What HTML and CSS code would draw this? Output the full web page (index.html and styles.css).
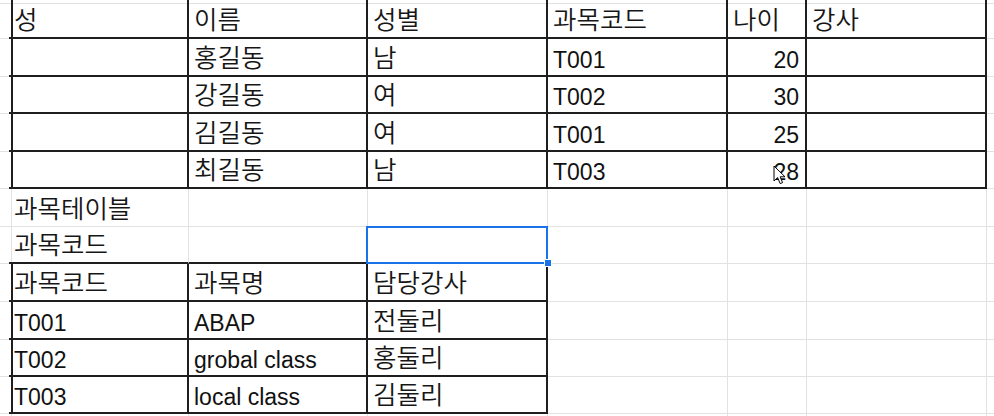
FILE: index.html
```html
<!DOCTYPE html>
<html lang="ko">
<head>
<meta charset="utf-8">
<title>Sheet</title>
<link rel="stylesheet" href="styles.css">
</head>
<body>
<div class="sheet">
  <!-- top sliver row -->
  <div class="c vr"></div><div class="c vr"></div><div class="c vr"></div><div class="c vr"></div><div class="c vr"></div><div class="c vr"></div><div class="c vr"></div><div class="c nr"></div>
  <!-- header -->
  <div class="c vr"></div><div class="c vr hb"><span class="ko">성</span></div><div class="c vr hb"><span class="ko">이름</span></div><div class="c vr hb"><span class="ko">성별</span></div><div class="c vr hb"><span class="ko">과목코드</span></div><div class="c vr hb"><span class="ko">나이</span></div><div class="c vr hb"><span class="ko">강사</span></div><div class="c nr"></div>
  <div class="c vr"></div><div class="c vr hb"></div><div class="c vr hb"><span class="ko">홍길동</span></div><div class="c vr hb"><span class="ko">남</span></div><div class="c vr hb">T001</div><div class="c vr hb num">20</div><div class="c vr hb"></div><div class="c nr"></div>
  <div class="c vr"></div><div class="c vr hb"></div><div class="c vr hb"><span class="ko">강길동</span></div><div class="c vr hb"><span class="ko">여</span></div><div class="c vr hb">T002</div><div class="c vr hb num">30</div><div class="c vr hb"></div><div class="c nr"></div>
  <div class="c vr"></div><div class="c vr hb"></div><div class="c vr hb"><span class="ko">김길동</span></div><div class="c vr hb"><span class="ko">여</span></div><div class="c vr hb">T001</div><div class="c vr hb num">25</div><div class="c vr hb"></div><div class="c nr"></div>
  <div class="c vr"></div><div class="c vr hb"></div><div class="c vr hb"><span class="ko">최길동</span></div><div class="c vr hb"><span class="ko">남</span></div><div class="c vr hb">T003</div><div class="c vr hb num">28</div><div class="c vr hb"></div><div class="c nr"></div>
  <!-- 과목테이블 -->
  <div class="c"></div><div class="c"><span class="ko">과목테이블</span></div><div class="c"></div><div class="c"></div><div class="c"></div><div class="c"></div><div class="c"></div><div class="c nr"></div>
  <div class="c"></div><div class="c hb"><span class="ko">과목코드</span></div><div class="c hb"></div><div class="c hb sel"></div><div class="c"></div><div class="c"></div><div class="c"></div><div class="c nr"></div>
  <!-- lower table -->
  <div class="c vr"></div><div class="c vr hb"><span class="ko">과목코드</span></div><div class="c vr hb"><span class="ko">과목명</span></div><div class="c vr hb"><span class="ko">담당강사</span></div><div class="c"></div><div class="c"></div><div class="c"></div><div class="c nr"></div>
  <div class="c vr"></div><div class="c vr hb">T001</div><div class="c vr hb">ABAP</div><div class="c vr hb"><span class="ko">전둘리</span></div><div class="c"></div><div class="c"></div><div class="c"></div><div class="c nr"></div>
  <div class="c vr"></div><div class="c vr hb">T002</div><div class="c vr hb">grobal class</div><div class="c vr hb"><span class="ko">홍둘리</span></div><div class="c"></div><div class="c"></div><div class="c"></div><div class="c nr"></div>
  <div class="c vr"></div><div class="c vr hb">T003</div><div class="c vr hb">local class</div><div class="c vr hb"><span class="ko">김둘리</span></div><div class="c"></div><div class="c"></div><div class="c"></div><div class="c nr"></div>
  <!-- bottom sliver -->
  <div class="c"></div><div class="c"></div><div class="c"></div><div class="c"></div><div class="c"></div><div class="c"></div><div class="c"></div><div class="c nr"></div>
</div>
<svg class="cursor" width="14" height="21" viewBox="0 0 14 21" aria-hidden="true">
  <path d="M1 1 L1 16 L4.6 12.6 L7.2 18.6 L9.6 17.6 L7.1 11.8 L12 11.8 Z" fill="#fff" stroke="#000" stroke-width="1" stroke-linejoin="round"/>
</svg>
</body>
</html>
```

FILE: styles.css
```css
html, body {
  margin: 0;
  padding: 0;
  background: #fff;
  overflow: hidden;
}

body {
  position: relative;
  width: 994px;
  height: 416px;
  font-family: "Liberation Sans", "Noto Sans CJK KR", Arial, sans-serif;
  font-size: 23px;
  color: #111;
}

.sheet {
  display: grid;
  grid-template-columns: 9px 180px 179px 180px 180px 79px 180px 7px;
  grid-template-rows: 2px 37px 38px 37px 38px 37px 38px 37px 38px 38px 37px 37px 2px;
  width: 994px;
  height: 416px;
}

.c {
  box-sizing: border-box;
  border-right: 1px solid #e2e2e2;
  border-bottom: 1px solid #e2e2e2;
  display: flex;
  align-items: flex-end;
  padding: 0 6px 3px 5px;
  line-height: 24px;
  white-space: nowrap;
  min-width: 0;
  overflow: visible;
}

.ko {
  font-family: "Noto Sans CJK KR", sans-serif;
  font-size: 25.5px;
  font-weight: 350;
  line-height: 24px;
  color: #161616;
  position: relative;
  top: -4px;
}

.vr {
  border-right: 2px solid #1e1e1e;
}

.hb {
  border-bottom: 2px solid #1e1e1e;
}

.nr {
  border-right: none;
}

.num {
  justify-content: flex-end;
}

.sel {
  position: relative;
}

.sel::after {
  content: "";
  position: absolute;
  left: -2px;
  top: -1px;
  right: -1px;
  bottom: -2px;
  border: 2px solid #1a73e8;
}

.sel::before {
  content: "";
  position: absolute;
  right: -5px;
  bottom: -5px;
  width: 6px;
  height: 6px;
  background: #1a73e8;
  border: 1px solid #fff;
  z-index: 1;
}

.cursor {
  position: absolute;
  left: 773px;
  top: 165px;
}
```
